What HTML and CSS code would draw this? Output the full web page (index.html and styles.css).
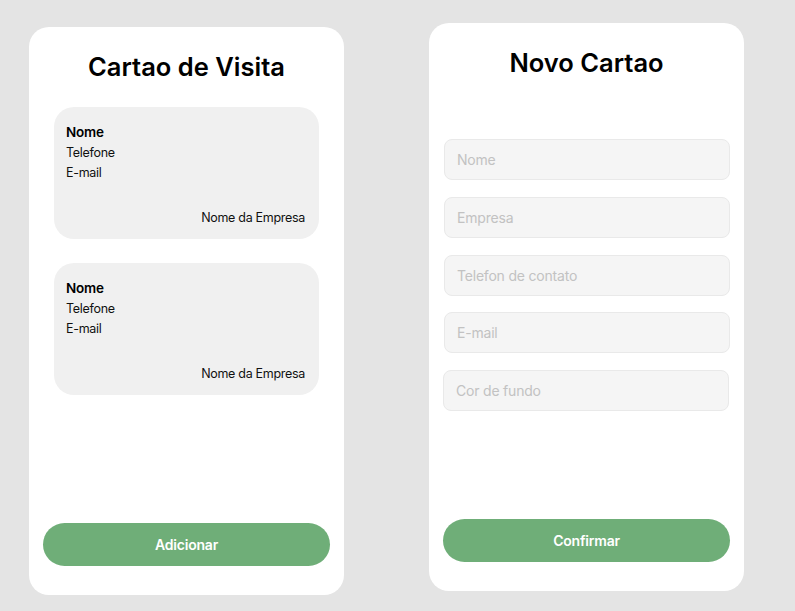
FILE: index.html
```html
<!DOCTYPE html>
<html lang="pt">
<head>
<meta charset="utf-8">
<title>Cartao de Visita</title>
<link rel="stylesheet" href="styles.css">
</head>
<body>
<main class="screens">
  <section class="panel panel-list">
    <h1 class="title">Cartao de Visita</h1>
    <div class="cards">
      <article class="card">
        <div class="card-name">Nome</div>
        <div class="card-line">Telefone</div>
        <div class="card-line">E-mail</div>
        <div class="card-company">Nome da Empresa</div>
      </article>
      <article class="card">
        <div class="card-name">Nome</div>
        <div class="card-line">Telefone</div>
        <div class="card-line">E-mail</div>
        <div class="card-company">Nome da Empresa</div>
      </article>
    </div>
    <button class="btn">Adicionar</button>
  </section>
  <section class="panel panel-form">
    <h1 class="title">Novo Cartao</h1>
    <form class="form">
      <input class="field" type="text" placeholder="Nome">
      <input class="field" type="text" placeholder="Empresa">
      <input class="field" type="text" placeholder="Telefon de contato">
      <input class="field" type="text" placeholder="E-mail">
      <input class="field field-shift" type="text" placeholder="Cor de fundo">
    </form>
    <button class="btn">Confirmar</button>
  </section>
</main>
</body>
</html>
```
FILE: styles.css
```css
* { box-sizing: border-box; }
html, body { margin: 0; padding: 0; }
body {
  background: #e4e4e4;
  font-family: Inter, "Noto Sans", sans-serif;
  color: #000;
  width: 795px;
  height: 611px;
  overflow: hidden;
}
.screens {
  display: flex;
  align-items: flex-start;
  gap: 85px;
  padding: 23px 0 0 29px;
}
.panel {
  width: 315px;
  height: 568px;
  background: #fff;
  border-radius: 20px;
  display: flex;
  flex-direction: column;
  padding: 24px 14px 29px;
}
.panel-list { margin-top: 4px; }
.title {
  margin: 0;
  font-size: 25.5px;
  line-height: 32px;
  font-weight: 600;
  text-align: center;
  letter-spacing: 0;
}
.cards {
  display: flex;
  flex-direction: column;
  gap: 24px;
  margin: 24px 11px 0;
}
.card {
  height: 132px;
  background: #f0f0f0;
  border-radius: 20px;
  padding: 15px 14px 11px 12px;
  display: flex;
  flex-direction: column;
  font-size: 12.5px;
  letter-spacing: -0.3px;
  line-height: 20px;
  color: #111;
}
.card-name {
  font-size: 13.5px;
  font-weight: 600;
  line-height: 20px;
  letter-spacing: -0.2px;
  margin-bottom: 1px;
  color: #000;
}
.card-company {
  margin-top: auto;
  text-align: right;
}
.form {
  display: flex;
  flex-direction: column;
  gap: 16.75px;
  margin: 60px 0 0 1px;
}
.field {
  height: 41px;
  width: 286px;
  border: 1px solid #e9e9e9;
  background: #f5f5f5;
  border-radius: 8px;
  padding: 0 12px;
  font-family: Inter, "Noto Sans", sans-serif;
  font-size: 14px;
  letter-spacing: -0.2px;
  color: #333;
  outline: none;
}
.field::placeholder { color: #c2c2c2; }
.field-shift { margin-left: -1px; }
.btn {
  margin-top: auto;
  height: 43px;
  width: 287px;
  border: none;
  border-radius: 22px;
  background: #6fae78;
  color: #fff;
  font-family: Inter, "Noto Sans", sans-serif;
  font-size: 14px;
  letter-spacing: -0.2px;
  font-weight: 600;
}
```
